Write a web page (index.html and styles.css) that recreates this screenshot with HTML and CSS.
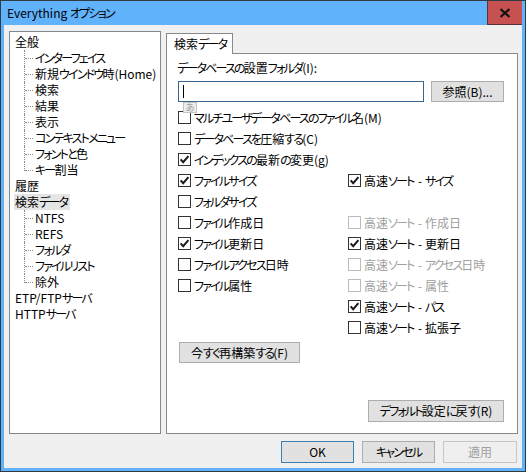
FILE: index.html
```html
<!DOCTYPE html>
<html lang="ja">
<head>
<meta charset="utf-8">
<title>Everything オプション</title>
<link rel="stylesheet" href="styles.css">
</head>
<body>
<div class="window">
  <div class="titlebar">
    <span class="title">Everything <span class="k">オプション</span></span>
    <div class="close">
      <svg width="12" height="10" viewBox="0 0 12 10"><path d="M1.5 1 L10.5 9 M10.5 1 L1.5 9" stroke="#111" stroke-width="2.3" fill="none"/></svg>
    </div>
  </div>
  <div class="client">
    <div class="main">
      <div class="tree">
        <ul class="tree-root">
          <li><span class="node">全般</span>
            <ul class="tree-children">
              <li><span class="k">インターフェイス</span></li>
              <li>新規<span class="k">ウインドウ</span>時(Home)</li>
              <li>検索</li>
              <li>結果</li>
              <li>表示</li>
              <li><span class="k">コンテキストメニュー</span></li>
              <li><span class="k">フォントと</span>色</li>
              <li><span class="k">キー</span>割当</li>
            </ul>
          </li>
          <li><span class="node">履歴</span></li>
          <li><span class="node sel">検索<span class="k">データ</span></span>
            <ul class="tree-children">
              <li>NTFS</li>
              <li>REFS</li>
              <li><span class="k">フォルダ</span></li>
              <li><span class="k">ファイルリスト</span></li>
              <li>除外</li>
            </ul>
          </li>
          <li><span class="node">ETP/FTP<span class="k">サーバ</span></span></li>
          <li><span class="node">HTTP<span class="k">サーバ</span></span></li>
        </ul>
      </div>
      <div class="right">
        <div class="tabs"><div class="tab">検索<span class="k">データ</span></div></div>
        <div class="panel">
          <div class="label"><span class="k">データベースの</span>設置<span class="k">フォルダ</span>(I):</div>
          <div class="path-row">
            <div class="input"><span class="caret"></span></div>
            <button class="btn browse">参照(B)...</button>
            <div class="ime">あ</div>
          </div>
          <div class="checks">
            <label class="cb wide"><span class="box"></span><span><span class="k">マルチユーザデータベースのファイル</span>名(M)</span></label>
            <label class="cb wide"><span class="box"></span><span><span class="k">データベースを</span>圧縮<span class="k">する</span>(C)</span></label>
            <label class="cb wide"><span class="box on"><svg viewBox="0 0 11 11"><polyline points="1.6,5.4 4.2,8.2 9.4,2.2"/></svg></span><span><span class="k">インデックスの</span>最新<span class="k">の</span>変更(g)</span></label>

            <label class="cb"><span class="box on"><svg viewBox="0 0 11 11"><polyline points="1.6,5.4 4.2,8.2 9.4,2.2"/></svg></span><span class="k">ファイルサイズ</span></label>
            <label class="cb"><span class="box on"><svg viewBox="0 0 11 11"><polyline points="1.6,5.4 4.2,8.2 9.4,2.2"/></svg></span><span>高速<span class="k">ソー</span>ト - <span class="k">サイズ</span></span></label>

            <label class="cb"><span class="box"></span><span class="k">フォルダサイズ</span></label>
            <div></div>

            <label class="cb"><span class="box"></span><span><span class="k">ファイル</span>作成日</span></label>
            <label class="cb disabled"><span class="box"></span><span>高速<span class="k">ソー</span>ト - 作成日</span></label>

            <label class="cb"><span class="box on"><svg viewBox="0 0 11 11"><polyline points="1.6,5.4 4.2,8.2 9.4,2.2"/></svg></span><span><span class="k">ファイル</span>更新日</span></label>
            <label class="cb"><span class="box on"><svg viewBox="0 0 11 11"><polyline points="1.6,5.4 4.2,8.2 9.4,2.2"/></svg></span><span>高速<span class="k">ソー</span>ト - 更新日</span></label>

            <label class="cb"><span class="box"></span><span><span class="k">ファイルアクセス</span>日時</span></label>
            <label class="cb disabled"><span class="box"></span><span>高速<span class="k">ソー</span>ト - <span class="k">アクセス</span>日時</span></label>

            <label class="cb"><span class="box"></span><span><span class="k">ファイル</span>属性</span></label>
            <label class="cb disabled"><span class="box"></span><span>高速<span class="k">ソー</span>ト - 属性</span></label>

            <div></div>
            <label class="cb"><span class="box on"><svg viewBox="0 0 11 11"><polyline points="1.6,5.4 4.2,8.2 9.4,2.2"/></svg></span><span>高速<span class="k">ソー</span>ト - <span class="k">パス</span></span></label>

            <div></div>
            <label class="cb"><span class="box"></span><span>高速<span class="k">ソー</span>ト - 拡張子</span></label>
          </div>
          <button class="btn rebuild">今<span class="k">すぐ</span>再構築<span class="k">する</span>(F)</button>
          <button class="btn reset"><span class="k">デフォルト</span>設定<span class="k">に</span>戻<span class="k">す</span>(R)</button>
        </div>
      </div>
    </div>
    <div class="footer">
      <button class="btn fbtn default">OK</button>
      <button class="btn fbtn"><span class="k">キャンセル</span></button>
      <button class="btn fbtn apply" disabled>適用</button>
    </div>
  </div>
</div>
</body>
</html>
```

FILE: styles.css
```css
* { box-sizing: border-box; margin: 0; padding: 0; }
html, body { width: 526px; height: 472px; overflow: hidden; }
body {
  font-family: "Noto Sans CJK JP", "Noto Sans", sans-serif;
  font-size: 12px;
  line-height: 16px;
  color: #000;
  background: #fff;
  white-space: nowrap;
  font-feature-settings: "palt";
}

/* kana runs: narrower, like the Meiryo UI face of the original */
.k { letter-spacing: -1.8px; }

.window {
  width: 526px;
  height: 472px;
  border: 1px solid #2f3a44;
  background: #60b2fb;
  display: flex;
  flex-direction: column;
}

.titlebar {
  height: 24px;
  flex: none;
  display: flex;
  align-items: center;
  justify-content: space-between;
  padding-left: 6px;
}
.title { font-size: 12px; line-height: 16px; }
.close {
  width: 35px;
  height: 24px;
  margin-right: 3px;
  background: #c75050;
  border-left: 1px solid #5a3434;
  border-bottom: 1px solid #5a3434;
  display: flex;
  align-items: center;
  justify-content: center;
}

.client {
  flex: 1;
  margin: 0 3px 3px 3px;
  background: #f0f0f0;
  padding: 6px 4px 5px 5px;
  display: flex;
  flex-direction: column;
}

.main {
  height: 403px;
  display: flex;
  gap: 5px;
}

/* tree */
.tree {
  width: 152px;
  height: 403px;
  background: #fff;
  border: 1px solid #828790;
  padding: 2px 0 0 5px;
}
.tree ul { list-style: none; }
.node { display: inline-block; height: 16px; line-height: 16px; }
.node.sel { background: #e5e5e5; margin-left: -1px; padding: 0 3px 0 1px; }
.tree-children li {
  position: relative;
  height: 16px;
  line-height: 16px;
  padding-left: 20px;
}
.tree-children li::before {
  content: "";
  position: absolute;
  left: 10px;
  top: 8px;
  width: 8px;
  border-top: 1px dotted #8a8a8a;
}
.tree-children li::after {
  content: "";
  position: absolute;
  left: 9px;
  top: 0;
  height: 16px;
  border-left: 1px dotted #8a8a8a;
}
.tree-children li:last-child::after { height: 9px; }

/* right */
.right {
  width: 352px;
  display: flex;
  flex-direction: column;
}
.tabs { height: 22px; flex: none; display: flex; align-items: flex-start; }
.tab {
  position: relative;
  z-index: 1;
  margin-top: 2px;
  width: 67px;
  height: 21px;
  background: #fff;
  border: 1px solid #898989;
  border-bottom: none;
  padding: 2px 0 0 7px;
  line-height: 16px;
}
.panel {
  flex: 1;
  background: #fff;
  border: 1px solid #898989;
  padding: 6px 13px 11px 11px;
  display: flex;
  flex-direction: column;
}
.label { margin-left: -1px; height: 16px; line-height: 16px; }
.path-row {
  position: relative;
  margin-top: 5px;
  height: 21px;
  display: flex;
}
.input {
  width: 246px;
  height: 21px;
  border: 1px solid #3a6591;
  background: #fff;
  position: relative;
}
.caret {
  position: absolute;
  left: 4px;
  top: 3px;
  width: 1px;
  height: 13px;
  background: #000;
}
.ime {
  position: absolute;
  left: 5px;
  top: 21px;
  width: 14px;
  height: 11px;
  background: #ececec;
  border: 1px solid #c4c4c4;
  color: #9a9a9a;
  font-size: 9px;
  line-height: 9px;
  text-align: center;
  z-index: 2;
}

.btn {
  font-family: inherit;
  font-size: 12px;
  line-height: 16px;
  font-feature-settings: "palt";
  color: #000;
  background: #e1e1e1;
  border: 1px solid #adadad;
  text-align: center;
  padding: 0;
  white-space: nowrap;
}
.browse { width: 73px; height: 21px; margin-left: 7px; }

.checks {
  margin-top: 5px;
  display: grid;
  grid-template-columns: 170px 1fr;
  grid-auto-rows: 21px;
}
.cb {
  display: flex;
  align-items: center;
  height: 21px;
  white-space: nowrap;
}
.cb.wide { grid-column: 1 / 3; }
.box {
  width: 13px;
  height: 13px;
  flex: none;
  border: 1px solid #333;
  background: #fff;
  margin-right: 3px;
  display: flex;
}
.box svg { width: 11px; height: 11px; }
.box polyline { fill: none; stroke: #1a1a1a; stroke-width: 2; }
.cb.disabled { color: #a0a0a0; }
.cb.disabled .box { border-color: #bcbcbc; }

.rebuild { margin-top: 4px; margin-left: 1px; width: 121px; height: 21px; }
.reset { margin-top: 37px; width: 136px; height: 22px; align-self: flex-end; }

.footer {
  margin-top: 7px;
  height: 22px;
  display: flex;
  justify-content: flex-end;
  gap: 8px;
  padding-right: 1px;
}
.fbtn { width: 73px; height: 22px; }
.fbtn.default { border-color: #3c7fb1; }
.fbtn.apply { width: 74px; background: #efefef; border-color: #c6c6c6; color: #a0a0a0; }
```
